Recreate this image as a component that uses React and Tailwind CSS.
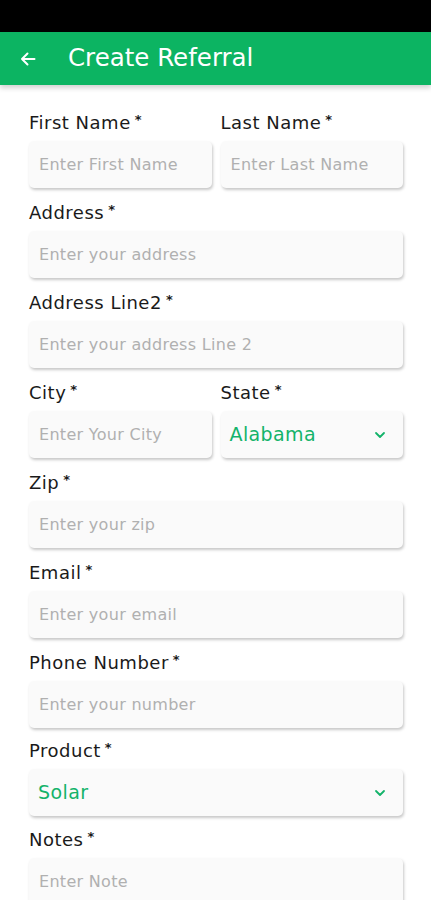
import React from "react";

const font = { fontFamily: '"DejaVu Sans", "Noto Sans", sans-serif' };

function Chevron() {
  return (
    <svg width="12" height="8" viewBox="0 0 12 8" className="shrink-0">
      <path d="M2 2 L6 6 L10 2" fill="none" stroke="#13b36a" strokeWidth="1.8" strokeLinecap="round" strokeLinejoin="round" />
    </svg>
  );
}

function Label({ children, h = "h-[43px]" }) {
  return (
    <div className={`${h} flex items-end pb-[7px]`}>
      <span className="text-[18px] leading-[22px] text-[#1a1a1a] tracking-[0.5px] whitespace-nowrap">
        {children}
        <span className="ml-[4px] text-[13px] font-bold align-[5px]">*</span>
      </span>
    </div>
  );
}

function Input({ placeholder }) {
  return (
    <div className="h-[47px] rounded-[5px] bg-[#fafafa] shadow-[1px_2px_3px_rgba(0,0,0,0.22)] flex items-center px-[10px] overflow-hidden">
      <span className="text-[16px] text-[#b0b0b0] tracking-[0.3px] whitespace-nowrap">{placeholder}</span>
    </div>
  );
}

function Select({ value }) {
  return (
    <div className="h-[47px] rounded-[5px] bg-[#fafafa] shadow-[1px_2px_3px_rgba(0,0,0,0.22)] flex items-center justify-between pl-[9px] pr-[17px]">
      <span className="text-[19px] text-[#13b36a] tracking-[0.4px]">{value}</span>
      <Chevron />
    </div>
  );
}

function Field({ label, children, h }) {
  return (
    <div className="flex flex-col min-w-0">
      <Label h={h}>{label}</Label>
      {children}
    </div>
  );
}

export default function App() {
  return (
    <div className="w-[431px] h-[900px] bg-white overflow-hidden" style={font}>
      <div className="h-[32px] bg-black" />
      <div className="h-[53px] bg-[#0cb462] flex items-center shadow-[0_3px_5px_rgba(0,0,0,0.18)] relative z-10">
        <svg width="16" height="14" viewBox="0 0 16 14" className="ml-[20px]">
          <path d="M14.5 7 H2 M7.5 1.5 L2 7 L7.5 12.5" fill="none" stroke="white" strokeWidth="2" strokeLinecap="round" strokeLinejoin="round" />
        </svg>
        <span className="ml-[32px] text-[24.5px] text-white">Create Referral</span>
      </div>
      <div className="pt-[13px] pl-[29px] pr-[28px] flex flex-col">
        <div className="grid grid-cols-2 gap-[9px]">
          <Field label="First Name"><Input placeholder="Enter First Name" /></Field>
          <Field label="Last Name"><Input placeholder="Enter Last Name" /></Field>
        </div>
        <Field label="Address"><Input placeholder="Enter your address" /></Field>
        <Field label="Address Line2"><Input placeholder="Enter your address Line 2" /></Field>
        <div className="grid grid-cols-2 gap-[9px]">
          <Field label="City"><Input placeholder="Enter Your City" /></Field>
          <Field label="State"><Select value="Alabama" /></Field>
        </div>
        <Field label="Zip"><Input placeholder="Enter your zip" /></Field>
        <Field label="Email"><Input placeholder="Enter your email" /></Field>
        <Field label="Phone Number"><Input placeholder="Enter your number" /></Field>
        <Field label="Product" h="h-[41px]"><Select value="Solar" /></Field>
        <Field label="Notes" h="h-[42px]"><Input placeholder="Enter Note" /></Field>
      </div>
    </div>
  );
}
